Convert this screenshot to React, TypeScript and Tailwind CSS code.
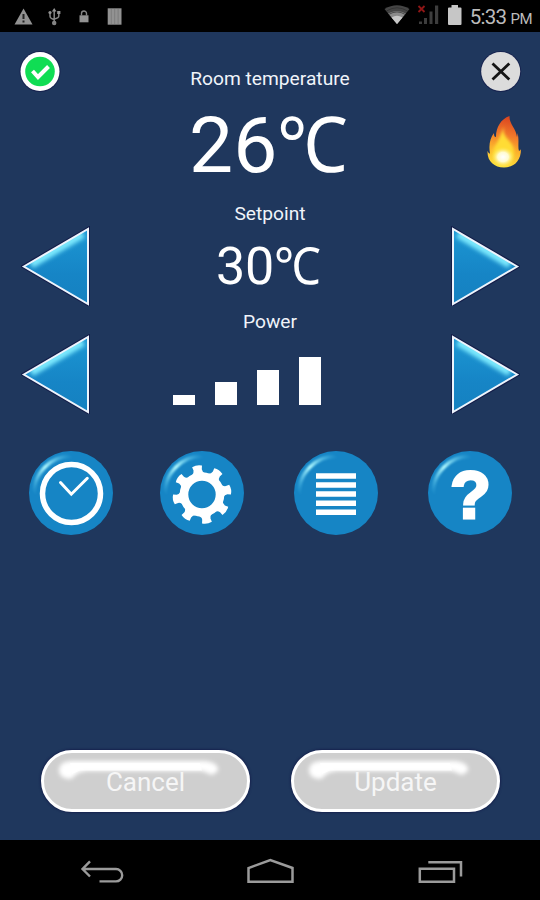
import type { ReactNode } from "react"

function StatusBar() {
  return (
    <div className="flex h-8 items-center justify-between bg-black pl-[14px] pr-2">
      <svg width="110" height="32" viewBox="14 0 110 32" fill="#929292">
        <path d="M23.5 8.5 L32.5 24.5 H14.5 Z" />
        <path d="M23.5 14 v5 M23.5 20.5 v2" stroke="#222" strokeWidth="2" />
        <g stroke="#858585" strokeWidth="1.5" fill="none">
          <path d="M54.2 23 V10 M50 13 V16 Q50 18.5 54 19.5 M58.8 13.5 V16 Q58.8 18 54.4 19" />
          <circle cx="54.2" cy="23" r="1.5" fill="#858585" />
        </g>
        <path d="M54.2 8 l2.3 3.6 h-4.6 Z M57.2 11 h3.2 v3 h-3.2 Z" />
        <circle cx="50" cy="12.5" r="1.6" />
        <rect x="79.5" y="15.3" width="9" height="7" />
        <path d="M81.5 15.5 v-2 a2.5 2.5 0 0 1 5 0 v2" stroke="#858585" strokeWidth="1.4" fill="none" />
        <rect x="107.7" y="8.3" width="13.8" height="16.4" />
        <path d="M111.3 9 v15 M114.7 9 v15 M118.1 9 v15" stroke="#777" strokeWidth="0.8" />
      </svg>
      <div className="flex items-center">
        <svg width="86" height="32" viewBox="382 0 86 32">
          <path d="M397 24 L384.5 9 Q397 1.5 409.5 9 Z" fill="#454545" />
          <path d="M397 24 L388.2 13.5 Q397 8.5 405.8 13.5 Z" fill="#8b8b8b" />
          <path d="M397 24 L391.5 17.5 Q397 14 402.5 17.5 Z" fill="#c8c8c8" />
          <path d="M386.5 11 Q397 4.5 407.5 11 M389 14.3 Q397 9.5 405 14.3" stroke="#2c2c2c" strokeWidth="0.7" fill="none" />
          <path d="M418.5 6 l6 6 M424.5 6 l-6 6" stroke="#8f1616" strokeWidth="1.8" />
          <g fill="#3d3d3d">
            <rect x="419" y="21.5" width="3" height="2.5" />
            <rect x="424" y="18" width="3" height="6" />
            <rect x="429.5" y="11.5" width="3" height="12.5" />
            <rect x="435" y="5.5" width="3.2" height="18.5" />
          </g>
          <path d="M451.5 5 h6.5 v2.5 h2.5 q1 0 1 1 V24 q0 1 -1 1 h-11.5 q-1 0 -1 -1 V8.5 q0 -1 1 -1 h2.5 Z" fill="#c6c6c6" />
        </svg>
        <div className="flex items-baseline gap-1 pl-[2px] pt-[2px] font-['Roboto',sans-serif] text-[#bcbcbc]">
          <span className="text-[20.5px] leading-8 tracking-[-0.7px]">5:33</span>
          <span className="text-[15px] tracking-[-0.5px]">PM</span>
        </div>
      </div>
    </div>
  )
}

function Label({ children }: { children: ReactNode }) {
  return (
    <div className="relative top-px text-center font-['Roboto',sans-serif] text-[19.2px] leading-7 text-[#f0f4fa]">
      {children}
    </div>
  )
}

function Arrow({ id, flip }: { id: string; flip?: boolean }) {
  return (
    <button className={flip ? "-scale-x-100" : ""}>
      <svg className="block" width="69" height="80" viewBox="0 0 69 80">
        <defs>
          <clipPath id={`clip-${id}`}>
            <path d="M2.8 40.5 L67 3 V78 Z" />
          </clipPath>
          <filter id={`blur-${id}`} x="-30%" y="-30%" width="160%" height="160%">
            <feGaussianBlur stdDeviation="1.9" />
          </filter>
          <linearGradient id={`fill-${id}`} x1="0" y1="0" x2="0" y2="1">
            <stop offset="0" stopColor="#1c97d3" />
            <stop offset="0.6" stopColor="#1685c6" />
            <stop offset="1" stopColor="#1581c0" />
          </linearGradient>
        </defs>
        <path d="M2.5 40.5 L67 3 V78 Z" fill="none" stroke="#141d49" strokeWidth="4" />
        <g clipPath={`url(#clip-${id})`}>
          <path d="M2.5 40.5 L67 3 V78 Z" fill={`url(#fill-${id})`} />
          <path d="M10 38.5 L62 8" stroke="#7deafe" strokeWidth="8" filter={`url(#blur-${id})`} />
        </g>
        <path d="M2.8 40.5 L67 3 V78 Z" fill="none" stroke="#edf4fc" strokeWidth="2" />
      </svg>
    </button>
  )
}

function RoundButton({ id, children }: { id: string; children: ReactNode }) {
  return (
    <button>
      <svg className="block" width="84" height="84" viewBox="-42 -42 84 84">
        <defs>
          <linearGradient id={`shine-${id}`} x1="0" y1="1" x2="1" y2="0">
            <stop offset="0.05" stopColor="#6fe0ff" stopOpacity="0" />
            <stop offset="0.5" stopColor="#b4fbff" />
            <stop offset="0.95" stopColor="#6fe0ff" stopOpacity="0" />
          </linearGradient>
          <filter id={`soft-${id}`} x="-30%" y="-30%" width="160%" height="160%">
            <feGaussianBlur stdDeviation="0.8" />
          </filter>
        </defs>
        <circle r="42" fill="#1685c5" />
        <path d="M-36.5 5 A37 37 0 0 1 5 -36.5" fill="none" stroke={`url(#shine-${id})`} strokeWidth="3.6" filter={`url(#soft-${id})`} />
        {children}
      </svg>
    </button>
  )
}

const teeth = [-10, 35, 80, 125, 170, 215, 260, 305]

function Flame() {
  return (
    <svg width="38" height="56" viewBox="486 114 38 56">
      <defs>
        <linearGradient id="flame" x1="0.6" y1="0" x2="0.45" y2="1">
          <stop offset="0" stopColor="#d9431f" />
          <stop offset="0.35" stopColor="#f0762a" />
          <stop offset="0.65" stopColor="#fbb12c" />
          <stop offset="1" stopColor="#fde23c" />
        </linearGradient>
        <radialGradient id="core">
          <stop offset="0" stopColor="#fff" />
          <stop offset="0.45" stopColor="#fffbd0" />
          <stop offset="1" stopColor="#ffe536" stopOpacity="0" />
        </radialGradient>
        <filter id="glow" x="-30%" y="-30%" width="160%" height="160%">
          <feGaussianBlur stdDeviation="1.6" />
        </filter>
      </defs>
      <path
        d="M510.5 116 C510 124 517 128 518 137 C518.5 135.5 518.5 134 518.5 133 C520.5 140 518.5 147 520 151 C521 150.5 521.5 150 522 149 C522 161 515 167.5 505 167.5 C495 167.5 488 161 488.5 151 C489.5 153 490 153.5 491 153.5 C489.5 145 491 138 495 133 C495 136 495.5 137 497 137 C497 127 502 119 510.5 116 Z"
        fill="url(#flame)"
      />
      <path d="M505 125 C502 137 511 139 514 147 C517 157 512 164 505 164 C496 164 492 156 495 148 C499 141 502 136 505 125 Z" fill="#ffdc36" filter="url(#glow)" />
      <ellipse cx="504" cy="157" rx="12" ry="10.5" fill="url(#core)" />
    </svg>
  )
}

function GlossyButton({ id, children }: { id: string; children: ReactNode }) {
  return (
    <button className="relative h-[62px] w-[209px] rounded-[32px] border-[3px] border-white bg-[#cfcfcf] shadow-[0_0_2px_1px_#17234f]">
      <svg className="absolute left-0 top-0" width="203" height="56" viewBox="0 0 203 56">
        <filter id={`gloss-${id}`} x="-20%" y="-80%" width="140%" height="260%">
          <feGaussianBlur stdDeviation="2.2" />
        </filter>
        <g filter={`url(#gloss-${id})`}>
          <path d="M15 18 Q15 8 28 8 H160 Q175 9 174 18 L168 22 L158 18 H42 L34 20 L27 26 Q16 26 15 18 Z" fill="#fff" />
        </g>
        <path d="M26 10 H156 L158 17.5 H36 L28 21 Z" fill="#fff" opacity="0.8" />
      </svg>
      <span className="relative top-[2px] font-['Roboto',sans-serif] text-[26px] leading-none text-[#f6f6f6]">{children}</span>
    </button>
  )
}

function NavBar() {
  return (
    <div className="flex h-[60px] items-center justify-between bg-black pl-20 pr-[76px]">
      <svg width="44" height="60" viewBox="80 840 44 60" fill="none" stroke="#9b9b9b" strokeWidth="2.4">
        <path d="M90 861.3 L82.5 869 L90 876.5 M83 869 H116 a6.2 6.2 0 0 1 0 12.4 H99.5" />
      </svg>
      <svg width="50" height="60" viewBox="246 840 50 60" fill="none" stroke="#9b9b9b" strokeWidth="2.5">
        <path d="M248.5 881.7 V868 L270.3 860 L292.5 868 V881.7 Z" />
      </svg>
      <svg width="46" height="60" viewBox="418 840 46 60" fill="none" stroke="#9b9b9b" strokeWidth="2.5">
        <path d="M419.8 868.8 H454 V881.7 H419.8 Z M428.3 862.3 H461 V876.5" />
      </svg>
    </div>
  )
}

export default function App() {
  return (
    <div className="flex h-[900px] w-[540px] flex-col overflow-hidden bg-[#1f375d]">
      <StatusBar />
      <main className="flex flex-1 flex-col">
        <div className="flex h-[167px] justify-between px-[18px] pt-[18px]">
          <div className="w-11">
            <svg width="44" height="44" viewBox="18 50 44 44">
              <circle cx="40" cy="71.5" r="20.5" fill="#17234f" />
              <circle cx="40" cy="71.5" r="19.5" fill="#fff" />
              <circle cx="40" cy="71.5" r="14.8" fill="#10dd54" />
              <path d="M32.5 71 L38 77 L48.5 66.5" fill="none" stroke="#fff" strokeWidth="4" />
            </svg>
          </div>
          <div className="flex flex-col items-center pt-[14px]">
            <Label>Room temperature</Label>
            <div className="-mt-[2px] ml-[3px] flex h-[100px] items-baseline font-['Roboto',sans-serif] text-[78.5px] leading-[106px] text-white">
              26<span className="origin-left scale-x-[0.92] font-['Noto_Sans',sans-serif] text-[77px]">℃</span>
            </div>
          </div>
          <div className="flex w-11 flex-col gap-[20px]">
            <svg width="44" height="44" viewBox="478 50 44 44">
              <circle cx="500.7" cy="71.5" r="20.5" fill="#17234f" />
              <circle cx="500.7" cy="71.5" r="19.5" fill="#dcdcdc" />
              <path d="M492.5 63.5 L509.3 79.5 M509.3 63.5 L492.5 79.5" stroke="#151515" strokeWidth="2.8" />
            </svg>
            <div className="pl-[7px]">
              <Flame />
            </div>
          </div>
        </div>

        <Label>Setpoint</Label>
        <div className="-mt-px flex h-20 items-center justify-between pl-[21px] pr-5">
          <Arrow id="set-down" />
          <div className="-mt-[2px] flex items-baseline font-['Roboto',sans-serif] text-[52px] leading-[76px] text-white">
            30<span className="origin-left scale-x-[0.92] font-['Noto_Sans',sans-serif] text-[51px]">℃</span>
          </div>
          <Arrow id="set-up" flip />
        </div>
        <div className="pt-px">
          <Label>Power</Label>
        </div>
        <div className="-mt-px flex h-20 items-center justify-between pl-[21px] pr-5">
          <Arrow id="power-down" />
          <div className="mr-[48px] flex h-full items-end gap-[20px] pb-[9px]">
            <div className="h-[10px] w-[22px] bg-white" />
            <div className="h-[23px] w-[22px] bg-white" />
            <div className="h-[35px] w-[22px] bg-white" />
            <div className="h-[48px] w-[22px] bg-white" />
          </div>
          <Arrow id="power-up" flip />
        </div>

        <div className="mt-[37px] flex items-start gap-[50px] pl-[29px]">
          <div className="-mr-[3px] flex">
            <RoundButton id="timer">
              <circle cx="0.5" cy="0.5" r="29" fill="none" stroke="#fff" strokeWidth="5.5" />
              <path d="M-10.5 -10.5 L0.3 1.2 L16.3 -14.7" fill="none" stroke="#fff" strokeWidth="3" strokeLinecap="round" />
            </RoundButton>
          </div>
          <RoundButton id="settings">
            <g transform="translate(0 1.5)">
              <circle r="18" fill="none" stroke="#fff" strokeWidth="8.6" />
              {teeth.map((angle) => (
                <path
                  key={angle}
                  d="M-7 -20 Q-4 -22.5 -4.2 -25 L-5 -28.5 Q0 -30.5 5 -28.5 L4.2 -25 Q4 -22.5 7 -20 Z"
                  fill="#fff"
                  transform={`rotate(${angle})`}
                />
              ))}
            </g>
          </RoundButton>
          <RoundButton id="program">
            <path d="M-20 -17 h40 M-20 -8 h40 M-20 1 h40 M-20 10.3 h40 M-20 19.3 h40" stroke="#fff" strokeWidth="5.5" />
          </RoundButton>
          <RoundButton id="help">
            <text
              x="0.5"
              y="25"
              textAnchor="middle"
              fill="#fff"
              stroke="#fff"
              strokeWidth="2.8"
              className="font-['Liberation_Sans',sans-serif] text-[67px] font-bold"
            >
              ?
            </text>
          </RoundButton>
        </div>

        <div className="mb-[28px] mt-auto flex justify-between pl-[41px] pr-10">
          <GlossyButton id="cancel">Cancel</GlossyButton>
          <GlossyButton id="update">Update</GlossyButton>
        </div>
      </main>
      <NavBar />
    </div>
  )
}
